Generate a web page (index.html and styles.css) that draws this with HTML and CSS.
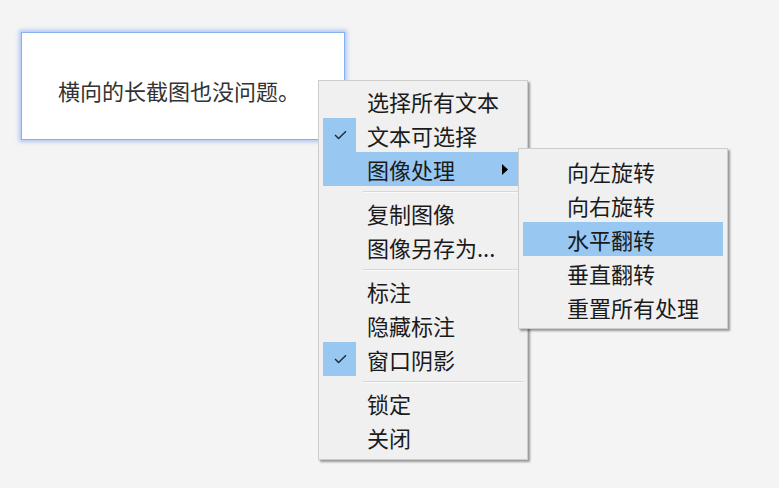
FILE: index.html
```html
<!DOCTYPE html>
<html lang="zh-CN">
<head>
<meta charset="utf-8">
<title>菜单</title>
<link rel="stylesheet" href="styles.css">
</head>
<body>
<div class="stage">
  <div class="card">横向的长截图也没问题。</div>

  <div class="menu main-menu">
    <div class="item"><span class="gutter"></span><span class="label">选择所有文本</span></div>
    <div class="item checked"><span class="gutter"><svg width="13" height="10" viewBox="0 0 13 10"><path d="M1 5 L4.6 8.6 L12 1.2" fill="none" stroke="#1f2a36" stroke-width="1.4"/></svg></span><span class="label">文本可选择</span></div>
    <div class="item active"><span class="gutter"></span><span class="label">图像处理</span><svg class="arrow" width="6" height="11" viewBox="0 0 6 11"><path d="M0 0 L6 5.5 L0 11 Z" fill="#000"/></svg></div>
    <div class="sep"></div>
    <div class="item"><span class="gutter"></span><span class="label">复制图像</span></div>
    <div class="item"><span class="gutter"></span><span class="label">图像另存为...</span></div>
    <div class="sep"></div>
    <div class="item"><span class="gutter"></span><span class="label">标注</span></div>
    <div class="item"><span class="gutter"></span><span class="label">隐藏标注</span></div>
    <div class="item checked"><span class="gutter"><svg width="13" height="10" viewBox="0 0 13 10"><path d="M1 5 L4.6 8.6 L12 1.2" fill="none" stroke="#1f2a36" stroke-width="1.4"/></svg></span><span class="label">窗口阴影</span></div>
    <div class="sep"></div>
    <div class="item"><span class="gutter"></span><span class="label">锁定</span></div>
    <div class="item"><span class="gutter"></span><span class="label">关闭</span></div>
  </div>

  <div class="menu sub-menu">
    <div class="item"><span class="gutter"></span><span class="label">向左旋转</span></div>
    <div class="item"><span class="gutter"></span><span class="label">向右旋转</span></div>
    <div class="item active"><span class="gutter"></span><span class="label">水平翻转</span></div>
    <div class="item"><span class="gutter"></span><span class="label">垂直翻转</span></div>
    <div class="item"><span class="gutter"></span><span class="label">重置所有处理</span></div>
  </div>
</div>
</body>
</html>
```

FILE: styles.css
```css
* { box-sizing: border-box; }
html, body {
  margin: 0;
  padding: 0;
  width: 779px;
  height: 488px;
  overflow: hidden;
  background: #f4f4f4;
  font-family: "Noto Sans CJK SC", "Noto Sans", sans-serif;
  color: #1b1b1b;
}
.stage {
  position: relative;
  width: 779px;
  height: 488px;
  padding: 32px 0 0 21px;
}
.card {
  width: 324px;
  height: 108px;
  background: #fff;
  border: 1px solid #86b0f2;
  box-shadow: 0 0 4px 2px rgba(120, 165, 245, 0.55);
  display: flex;
  align-items: center;
  justify-content: center;
  padding: 8px 8px 0 0;
  font-size: 22px;
  color: #333;
}
.menu {
  position: absolute;
  background: #f0f0f0;
  border: 1px solid #cdcdcd;
  box-shadow: 2px 2px 2px rgba(0, 0, 0, 0.38);
  display: flex;
  flex-direction: column;
}
.main-menu {
  left: 318px;
  top: 80px;
  width: 210px;
  padding: 3px 4px 5px 4px;
}
.sub-menu {
  left: 518px;
  top: 148px;
  width: 210px;
  padding: 5px 4px 4px 4px;
}
.item {
  height: 34px;
  display: flex;
  align-items: center;
  font-size: 22px;
  line-height: 1;
}
.gutter {
  width: 33px;
  height: 34px;
  flex: none;
  display: flex;
  align-items: center;
  justify-content: center;
  padding-left: 1px;
}
.checked .gutter { background: #98c8f1; }
.label {
  margin-left: 11px;
  white-space: nowrap;
}
.active { background: #98c8f1; }
.arrow {
  margin-left: auto;
  margin-right: 15px;
}
.sep {
  height: 10px;
  margin-left: 40px;
  display: flex;
  align-items: center;
}
.sep::before {
  content: "";
  display: block;
  width: 100%;
  height: 1px;
  background: #d7d7d7;
  box-shadow: 0 1px 0 #fafafa;
}
```
